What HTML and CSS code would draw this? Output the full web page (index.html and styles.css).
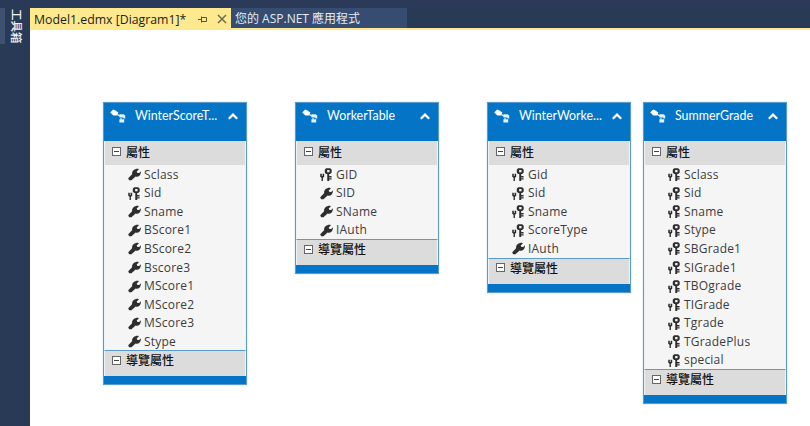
FILE: index.html
```html
<!DOCTYPE html>
<html lang="zh-Hant">
<head>
<meta charset="utf-8">
<title>Model1.edmx</title>
<link rel="stylesheet" href="styles.css">
</head>
<body>
<svg class="defs" width="0" height="0" aria-hidden="true">
  <symbol id="wrench" viewBox="0 0 12 11">
    <path d="M0.2 9 L3.8 5.2 C3.4 2.4 5.8 0 9.4 0.2 L10 0.8 L8 2.8 L8.8 4.2 L10.4 4.2 L11.8 2.4 C12.4 5.8 9.8 8.2 7 7.4 L3.2 10.8 L1 10.8 Z" fill="#2e2e2e"/>
  </symbol>
  <symbol id="key" viewBox="0 0 12 12">
    <path d="M5.6 0.2 h3.8 l1.4 1.4 v2.6 l-1.4 1.4 h-3.8 l-1.2 -1.4 v-2.6 Z M6.6 1.8 v2.2 h2.2 v-2.2 Z" fill="#2e2e2e" fill-rule="evenodd"/>
    <path d="M6.7 5 h1.8 v7 h-1.8 Z M8.5 7.4 h2.2 v1.3 h-2.2 Z M8.5 9.4 h2.2 v1.3 h-2.2 Z" fill="#2e2e2e"/>
    <path d="M0.2 5.4 h1.5 v2 h0.7 v-2 h1.5 v2.6 l-1.2 1 v3 h-1.3 v-3 l-1.2 -1 Z" fill="#2e2e2e"/>
  </symbol>
  <symbol id="entity" viewBox="0 0 16 14">
    <path d="M0.2 3.4 L3.2 0.4 L5.4 1.4 L8.4 3.6 L6.8 6.6 L3.4 6.4 Z" fill="#fff"/>
    <path d="M7 5.4 L10 7 M11 9 L11 11" stroke="#e6f1fa" stroke-width="1.2" fill="none"/>
    <path d="M9.4 5.2 h4.2 l1.6 1.4 v3 h-1.8 v-1 h-4 Z M9.4 10.2 h4.8 v3.2 h-4.8 Z" fill="#e4f0f9"/>
  </symbol>
  <symbol id="chev" viewBox="0 0 10 7">
    <path d="M0.8 5.8 L5 1.6 L9.2 5.8" fill="none" stroke="#fff" stroke-width="2.2"/>
  </symbol>
</svg>

<div class="ide">
  <aside class="sidebar">
    <span class="sidebar-mark"></span>
    <span class="sidebar-label">工具箱</span>
  </aside>
  <main class="workspace">
    <nav class="tabs">
      <div class="tab tab-active">
        <span class="tab-title">Model1.edmx [Diagram1]*</span>
        <svg class="tab-pin" viewBox="0 0 9 7"><path d="M0 3.5 H3 M3.5 0.5 V6.5 M3.5 1.5 H8.5 V5.5 H3.5" fill="none" stroke="#55553f" stroke-width="1"/></svg>
        <svg class="tab-close" viewBox="0 0 10 10"><path d="M1 1 L9 9 M9 1 L1 9" stroke="#6b6a50" stroke-width="1.5"/></svg>
      </div>
      <div class="tab tab-other">您的 ASP.NET 應用程式</div>
    </nav>
    <div class="canvas">

      <section class="entity e1">
        <header class="entity-head">
          <svg class="entity-icon"><use href="#entity"/></svg>
          <span class="entity-name">WinterScoreT...</span>
          <svg class="entity-chev"><use href="#chev"/></svg>
        </header>
        <div class="group"><span class="box"></span>屬性</div>
        <ul class="rows">
          <li><svg class="ic"><use href="#wrench"/></svg>Sclass</li>
          <li><svg class="ic"><use href="#key"/></svg>Sid</li>
          <li><svg class="ic"><use href="#wrench"/></svg>Sname</li>
          <li><svg class="ic"><use href="#wrench"/></svg>BScore1</li>
          <li><svg class="ic"><use href="#wrench"/></svg>BScore2</li>
          <li><svg class="ic"><use href="#wrench"/></svg>Bscore3</li>
          <li><svg class="ic"><use href="#wrench"/></svg>MScore1</li>
          <li><svg class="ic"><use href="#wrench"/></svg>MScore2</li>
          <li><svg class="ic"><use href="#wrench"/></svg>MScore3</li>
          <li><svg class="ic"><use href="#wrench"/></svg>Stype</li>
        </ul>
        <div class="group group-nav"><span class="box"></span>導覽屬性</div>
      </section>

      <section class="entity e2">
        <header class="entity-head">
          <svg class="entity-icon"><use href="#entity"/></svg>
          <span class="entity-name">WorkerTable</span>
          <svg class="entity-chev"><use href="#chev"/></svg>
        </header>
        <div class="group"><span class="box"></span>屬性</div>
        <ul class="rows">
          <li><svg class="ic"><use href="#key"/></svg>GID</li>
          <li><svg class="ic"><use href="#wrench"/></svg>SID</li>
          <li><svg class="ic"><use href="#wrench"/></svg>SName</li>
          <li><svg class="ic"><use href="#wrench"/></svg>IAuth</li>
        </ul>
        <div class="group group-nav"><span class="box"></span>導覽屬性</div>
      </section>

      <section class="entity e3">
        <header class="entity-head">
          <svg class="entity-icon"><use href="#entity"/></svg>
          <span class="entity-name">WinterWorke...</span>
          <svg class="entity-chev"><use href="#chev"/></svg>
        </header>
        <div class="group"><span class="box"></span>屬性</div>
        <ul class="rows">
          <li><svg class="ic"><use href="#key"/></svg>Gid</li>
          <li><svg class="ic"><use href="#key"/></svg>Sid</li>
          <li><svg class="ic"><use href="#key"/></svg>Sname</li>
          <li><svg class="ic"><use href="#key"/></svg>ScoreType</li>
          <li><svg class="ic"><use href="#wrench"/></svg>IAuth</li>
        </ul>
        <div class="group group-nav"><span class="box"></span>導覽屬性</div>
      </section>

      <section class="entity e4">
        <header class="entity-head">
          <svg class="entity-icon"><use href="#entity"/></svg>
          <span class="entity-name">SummerGrade</span>
          <svg class="entity-chev"><use href="#chev"/></svg>
        </header>
        <div class="group"><span class="box"></span>屬性</div>
        <ul class="rows">
          <li><svg class="ic"><use href="#key"/></svg>Sclass</li>
          <li><svg class="ic"><use href="#key"/></svg>Sid</li>
          <li><svg class="ic"><use href="#key"/></svg>Sname</li>
          <li><svg class="ic"><use href="#key"/></svg>Stype</li>
          <li><svg class="ic"><use href="#key"/></svg>SBGrade1</li>
          <li><svg class="ic"><use href="#key"/></svg>SIGrade1</li>
          <li><svg class="ic"><use href="#key"/></svg>TBOgrade</li>
          <li><svg class="ic"><use href="#key"/></svg>TIGrade</li>
          <li><svg class="ic"><use href="#key"/></svg>Tgrade</li>
          <li><svg class="ic"><use href="#key"/></svg>TGradePlus</li>
          <li><svg class="ic"><use href="#key"/></svg>special</li>
        </ul>
        <div class="group group-nav"><span class="box"></span>導覽屬性</div>
      </section>

    </div>
  </main>
</div>
</body>
</html>
```

FILE: styles.css
```css
* { box-sizing: border-box; }
html, body { margin: 0; padding: 0; height: 100%; overflow: hidden; }
body { font-family: "Open Sans", "Noto Sans CJK TC", sans-serif; background: #2a3a58; }
.defs { position: absolute; }

.ide { display: flex; width: 810px; height: 426px; }

.sidebar { width: 30px; flex: none; background: #293a56; display: flex; padding-top: 8px; }
.sidebar-mark { width: 5px; height: 36px; background: #3f5170; }
.sidebar-label {
  margin-left: 5px; height: 36px; padding-top: 1px; color: #eef1f6;
  font: 500 11.5px/13px "Noto Sans CJK TC", sans-serif;
  writing-mode: vertical-rl; text-orientation: sideways; white-space: nowrap;
}

.workspace { flex: 1; display: flex; flex-direction: column; padding-top: 8px; min-width: 0; }

.tabs { height: 22px; flex: none; display: flex; border-bottom: 2px solid #ffe98f; background: #293a56; }
.tab { height: 22px; display: flex; align-items: center; white-space: nowrap; }
.tab-active { width: 201px; background: #ffe98f; color: #1c1c14; padding-left: 4px; font-size: 12.3px; }
.tab-title { width: 164px; }
.tab-pin { width: 9px; height: 7px; flex: none; }
.tab-close { width: 10px; height: 10px; flex: none; margin-left: 10px; }
.tab-other { width: 176px; height: 20px; background: #364c70; color: #e6ebf3; padding-left: 4px; font-size: 12px; }

.canvas { flex: 1; position: relative; background: #fff; }

.entity {
  position: absolute; width: 144px; background: #0474c6;
  border: 1px solid #5a9bcb; padding-bottom: 8px;
  box-shadow: 0 0 1px rgba(4, 80, 140, .4);
}
.e1 { left: 73px; top: 72px; }
.e2 { left: 265px; top: 72px; }
.e3 { left: 457px; top: 72px; }
.e4 { left: 613px; top: 72px; }

.entity-head { height: 38px; display: flex; align-items: flex-start; padding: 4px 0 0 6px; color: #fff; font: 12.4px/18px Lato, sans-serif; }
.entity-icon { width: 16px; height: 14px; flex: none; margin-top: 2px; }
.entity-name { margin-left: 9px; width: 93px; white-space: nowrap; overflow: hidden; }
.entity-chev { width: 10px; height: 7px; flex: none; margin-top: 6px; }

.group {
  height: 24px; background: #dcdcdc; color: #111; display: flex; align-items: center;
  padding: 0 0 3px 7px; font: 500 12px/16px "Noto Sans CJK TC", sans-serif;
  border-left: 1px solid #eef3f7; border-right: 1px solid #eef3f7;
}
.group-nav { border-top: 1px solid #5a9bcb; height: 26px; padding-bottom: 7px; }
.box { width: 9px; height: 9px; border: 1px solid #666; background: #fff; margin-right: 5px; position: relative; flex: none; }
.box::after { content: ""; position: absolute; left: 1px; right: 1px; top: 3px; height: 1px; background: #444; }

.rows { list-style: none; margin: 0; padding: 0 0 0 23px; background: #f5f5f5; border-left: 1px solid #eef3f7; border-right: 1px solid #eef3f7; }
.rows li { height: 18.55px; display: flex; align-items: center; gap: 3px; font-size: 12px; line-height: 18px; color: #3c3c3c; letter-spacing: .2px; padding-top: 1px; }
.ic { width: 13px; height: 13px; flex: none; }
```
